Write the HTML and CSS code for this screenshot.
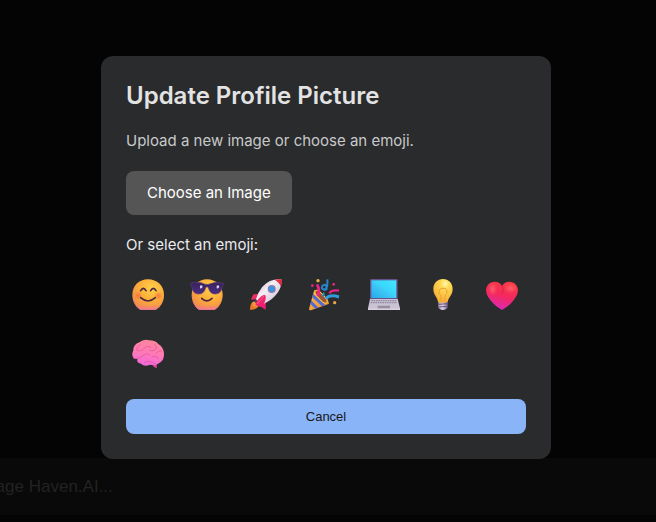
FILE: index.html
```html
<!DOCTYPE html>
<html lang="en">
<head>
<meta charset="utf-8">
<meta name="viewport" content="width=device-width, initial-scale=1">
<title>Update Profile Picture</title>
<link rel="stylesheet" href="styles.css">
</head>
<body>
<div class="page">
  <form class="composer">
    <input class="composer-input" type="text" placeholder="Message Haven.AI..." aria-label="Message">
  </form>
</div>
<div class="overlay">
  <section class="modal" role="dialog" aria-modal="true" aria-labelledby="modal-title">
    <h2 class="modal-title" id="modal-title">Update Profile Picture</h2>
    <p class="modal-text">Upload a new image or choose an emoji.</p>
    <button class="upload" type="button">Choose an Image</button>
    <p class="emoji-label" id="emoji-label">Or select an emoji:</p>
    <div class="emoji-list" role="group" aria-labelledby="emoji-label">
      <button class="emoji" type="button" aria-label="Smiling face">
        <svg viewBox="21 27 96 96">
          <defs>
            <radialGradient id="face" cx=".62" cy=".3" r=".8"><stop offset="0" stop-color="#ffd04a"/><stop offset=".5" stop-color="#fcae3a"/><stop offset=".85" stop-color="#f3904a"/><stop offset="1" stop-color="#ee7a70"/></radialGradient>
            <radialGradient id="blush"><stop offset="0" stop-color="#f7653f" stop-opacity=".75"/><stop offset="1" stop-color="#f7653f" stop-opacity="0"/></radialGradient>
            <linearGradient id="chin" x1="0" y1="0" x2="0" y2="1"><stop offset=".85" stop-color="#f47b90" stop-opacity="0"/><stop offset="1" stop-color="#f47b9c"/></linearGradient>
          </defs>
          <path d="M46 119C31 111 22 94 22 75C22 47 42 28 69 28S117 47 117 75C117 94 108 111 92 119Z" fill="url(#face)"/>
          <path d="M46 119C31 111 22 94 22 75C22 47 42 28 69 28S117 47 117 75C117 94 108 111 92 119Z" fill="url(#chin)"/>
          <circle cx="40" cy="77" r="13" fill="url(#blush)"/><circle cx="100" cy="77" r="13" fill="url(#blush)"/>
          <path d="M47 62Q55 48 63 62M77 62Q85 48 93 62M47 83Q69 103 91 83" fill="none" stroke="#4d2742" stroke-width="5" stroke-linecap="round"/>
        </svg>
      </button>
      <button class="emoji" type="button" aria-label="Face with sunglasses">
        <svg viewBox="27 27 96 96">
          <defs><linearGradient id="lens" x1="0" y1="0" x2="0" y2="1"><stop offset="0" stop-color="#382259"/><stop offset="1" stop-color="#4b2d84"/></linearGradient></defs>
          <path d="M51 119C37 111 29 94 29 75C29 47 49 28 75 28S122 47 122 75C122 94 113 111 98 119Z" fill="url(#face)"/>
          <path d="M51 119C37 111 29 94 29 75C29 47 49 28 75 28S122 47 122 75C122 94 113 111 98 119Z" fill="url(#chin)"/>
          <path d="M27 39Q50 33 67 42Q75 45 83 42Q101 33 123 39Q127 40 124 46L120 51Q118 72 99 72Q84 72 79 53Q75 47 71 53Q66 72 50 72Q32 72 30 51L26 46Q24 41 27 39Z" fill="url(#lens)" stroke="#5b3b7c" stroke-width="2"/>
          <path d="M54 47q6-3 8 3-2 7-8 5ZM104 47q6-3 8 3-2 7-8 5Z" fill="#d9cced"/>
          <path d="M59 85Q75 100 90 85" fill="none" stroke="#4d2742" stroke-width="5" stroke-linecap="round"/>
        </svg>
      </button>
      <button class="emoji" type="button" aria-label="Rocket">
        <svg viewBox="30 27 96 96">
          <defs>
            <linearGradient id="hull" x1="0" y1="0" x2="1" y2="1"><stop offset="0" stop-color="#bfa5be"/><stop offset=".4" stop-color="#f6eef5"/><stop offset="1" stop-color="#c4b3d3"/></linearGradient>
            <linearGradient id="fin" x1="0" y1="0" x2="1" y2="1"><stop offset="0" stop-color="#ed3158"/><stop offset="1" stop-color="#f1187d"/></linearGradient>
            <radialGradient id="flame" cx=".65" cy=".3"><stop offset="0" stop-color="#ffb647"/><stop offset="1" stop-color="#e7762d"/></radialGradient>
          </defs>
          <path d="M43 94Q30 96 30 119Q51 120 56 107Z" fill="url(#flame)"/>
          <path d="M60 71L41 73Q36 78 33 89L54 87ZM78 81L77 119Q68 116 60 105L67 92Z" fill="url(#fin)"/>
          <path d="M47 87L64 104L57 109L43 94Z" fill="#593b67"/>
          <path d="M124 28Q90 25 67 50Q54 66 48 88L64 104Q89 95 105 78Q127 56 124 28Z" fill="url(#hull)"/>
          <path d="M103 29Q115 27 125 28Q127 39 123 50Q117 36 103 29Z" fill="#e52c42"/>
          <path d="M65 78Q48 91 46 105L63 112Q79 96 77 77Q74 72 65 78Z" fill="url(#fin)"/>
          <path d="M72 78Q62 91 51 102" stroke="#fa6296" stroke-width="3" fill="none"/>
          <circle cx="95" cy="57" r="12" fill="#8f7ba0"/><circle cx="95" cy="57" r="8" fill="#3196e7"/>
        </svg>
      </button>
      <button class="emoji" type="button" aria-label="Party popper">
        <svg viewBox="27 27 96 96">
          <defs>
            <linearGradient id="cone" x1="0" y1="0" x2="1" y2="1"><stop offset="0" stop-color="#ffc24a"/><stop offset="1" stop-color="#ea842f"/></linearGradient>
            <clipPath id="cone-shape"><path d="M42 62L27 117Q27 122 33 121L86 102Q89 99 82 88L62 66Q47 56 42 62Z"/></clipPath>
          </defs>
          <g clip-path="url(#cone-shape)"><path d="M20 50H95V130H20Z" fill="url(#cone)"/><path d="M34 73L74 110M27 91L57 121" stroke="#506bd8" stroke-width="9"/></g>
          <ellipse cx="63" cy="80" rx="8" ry="25" transform="rotate(-43 63 80)" fill="#9b552f" stroke="#ffc34e" stroke-width="3"/>
          <path d="M53 79Q61 59 51 43" stroke="#f12386" stroke-width="8" fill="none"/>
          <path d="M68 79Q75 72 69 69M78 57Q61 60 67 48Q76 39 79 50Q82 59 76 59Q84 52 82 28" stroke="#2587c9" stroke-width="6" fill="none"/>
          <path d="M77 86Q90 72 117 81" stroke="#329bdd" stroke-width="9" fill="none"/>
          <path d="M88 70Q95 59 117 62" stroke="#ec2385" stroke-width="7" fill="none"/>
          <circle cx="54" cy="32" r="5" fill="#e9b548"/><circle cx="37" cy="47" r="4" fill="#e3288b"/><circle cx="101" cy="43" r="4" fill="#ed2787"/><circle cx="104" cy="98" r="5" fill="#e4a64b"/>
        </svg>
      </button>
      <button class="emoji" type="button" aria-label="Laptop">
        <svg viewBox="30 27 96 96">
          <defs><linearGradient id="screen" x1="0" y1="1" x2="1" y2="0"><stop offset="0" stop-color="#25a9e8"/><stop offset=".48" stop-color="#40c9f7"/><stop offset=".52" stop-color="#38d5fb"/><stop offset="1" stop-color="#43e7ff"/></linearGradient></defs>
          <rect x="36" y="27" width="83" height="62" rx="4" fill="#65518c"/><path d="M40 31H115V84H40Z" fill="url(#screen)"/>
          <path d="M36 87H119L126 115Q126 120 121 120H34Q29 120 30 115Z" fill="#c9c3d5"/>
          <path d="M40 92H115M38 98H117" stroke="#918aa1" stroke-width="4" stroke-dasharray="5 2"/>
          <path d="M30 115H126V120H30Z" fill="#d8cfe0"/><rect x="59" y="107" width="37" height="8" fill="#99909f"/>
        </svg>
      </button>
      <button class="emoji" type="button" aria-label="Light bulb">
        <svg viewBox="27 27 96 96">
          <defs>
            <radialGradient id="bulb" cx=".62" cy=".2" r=".85"><stop offset="0" stop-color="#fff6b0"/><stop offset=".25" stop-color="#ffda56"/><stop offset="1" stop-color="#f6a92f"/></radialGradient>
            <linearGradient id="cap"><stop offset="0" stop-color="#a89ab1"/><stop offset=".45" stop-color="#e1d5e6"/><stop offset="1" stop-color="#78668e"/></linearGradient>
          </defs>
          <path d="M61 96H89V111Q87 119 75 120Q63 119 61 111Z" fill="url(#cap)"/><path d="M61 103L89 101M62 111L88 109" stroke="#69537f" stroke-width="3"/>
          <path d="M75 27C58 27 46 40 46 56C46 76 58 79 60 96Q75 101 89 96C92 79 104 76 104 56C104 40 92 27 75 27Z" fill="url(#bulb)"/>
          <path d="M69 96V78Q60 70 64 60Q69 54 75 55Q82 54 86 60Q90 70 81 78V96" fill="none" stroke="#f0a038" stroke-width="3"/>
        </svg>
      </button>
      <button class="emoji" type="button" aria-label="Red heart">
        <svg viewBox="27 27 96 96">
          <defs><linearGradient id="heart" x1=".7" y1="0" x2=".4" y2="1"><stop offset="0" stop-color="#f93b43"/><stop offset=".5" stop-color="#f4285e"/><stop offset="1" stop-color="#da2abb"/></linearGradient><radialGradient id="shine"><stop offset="0" stop-color="#ff6770" stop-opacity=".8"/><stop offset="1" stop-color="#ff6770" stop-opacity="0"/></radialGradient></defs>
          <path d="M75 48C66 32 45 32 33 44C21 60 29 78 42 93Q55 109 75 120Q95 109 108 93C121 78 129 60 117 44C105 32 84 32 75 48Z" fill="url(#heart)"/>
          <ellipse cx="101" cy="55" rx="20" ry="15" fill="url(#shine)"/><ellipse cx="47" cy="57" rx="14" ry="20" fill="url(#shine)"/>
          <path d="M75 48Q81 57 75 71" fill="none" stroke="#bb204a" stroke-opacity=".45" stroke-width="4"/>
        </svg>
      </button>
      <button class="emoji" type="button" aria-label="Brain">
        <svg viewBox="21 27 96 96">
          <defs><linearGradient id="brain" x1=".6" y1="0" x2=".4" y2="1"><stop offset="0" stop-color="#ff879b"/><stop offset=".55" stop-color="#ff79b9"/><stop offset="1" stop-color="#f268dc"/></linearGradient></defs>
          <path d="M81 101L96 97L95 115Q84 111 81 101Z" fill="#e0449f"/>
          <path d="M27 86Q18 76 25 61Q25 43 43 37Q56 26 73 31Q91 31 100 42Q116 52 117 71Q118 88 106 97Q94 109 75 104Q58 111 48 101Q34 99 37 87Z" fill="url(#brain)"/>
          <path d="M27 85Q43 87 53 77Q69 66 76 77M45 43Q32 52 36 62Q52 65 60 52Q66 46 77 52M88 43Q101 53 88 61Q80 66 74 61M110 63Q98 61 94 71M81 80Q94 75 101 86M58 98Q70 89 81 98L91 101" fill="none" stroke="#d8438e" stroke-opacity=".5" stroke-width="3" stroke-linecap="round"/>
        </svg>
      </button>
    </div>
    <button class="cancel" type="button">Cancel</button>
  </section>
</div>
</body>
</html>
```
FILE: styles.css
```css
* { box-sizing: border-box; }

body {
  margin: 0;
  background: #040404;
  color: #e8eaed;
  font-family: "Google Sans", Inter, "Open Sans", sans-serif;
  font-size: 15px;
  line-height: 20px;
}

button, input { border: 0; margin: 0; }
button { cursor: pointer; }

.page {
  min-height: 100vh;
  display: flex;
  flex-direction: column;
  justify-content: flex-end;
  overflow: hidden;
  padding-bottom: 7px;
}

.composer {
  display: flex;
  margin-left: -45px;
  background: #090909;
}

.composer-input {
  flex: 1;
  height: 57px;
  padding: 0;
  background: transparent;
  font: 17px "Liberation Sans", Arial, sans-serif;
}

.composer-input::placeholder { color: #222; opacity: 1; }

.overlay {
  position: fixed;
  inset: 0;
  display: flex;
  align-items: center;
  justify-content: center;
  padding: 0 4px 7px 0;
}

.modal {
  width: 100%;
  max-width: 450px;
  padding: 25px;
  border-radius: 12px;
  background: #2a2b2d;
}

.modal-title {
  margin: 0 0 20px;
  font-size: 24px;
  line-height: 30px;
  font-weight: 600;
  color: #e3e3e3;
}

.modal-text { margin: 0 0 20px; color: #c8c9ca; }

.upload {
  display: block;
  height: 44px;
  padding: 0 21px;
  border-radius: 8px;
  background: #555;
  color: #fff;
  font: inherit;
}

.emoji-label { margin: 20px 0 18px; }

.emoji-list {
  display: flex;
  flex-wrap: wrap;
  gap: 16px 15px;
}

.emoji {
  width: 44px;
  height: 44px;
  padding: 6px;
  background: transparent;
}

.emoji svg {
  display: block;
  width: 32px;
  height: 32px;
  overflow: visible;
}

.cancel {
  display: block;
  width: 100%;
  height: 35px;
  margin-top: 22px;
  border-radius: 8px;
  background: #8ab4f8;
  color: #171717;
  font: 13px "Liberation Sans", Arial, sans-serif;
}
```
